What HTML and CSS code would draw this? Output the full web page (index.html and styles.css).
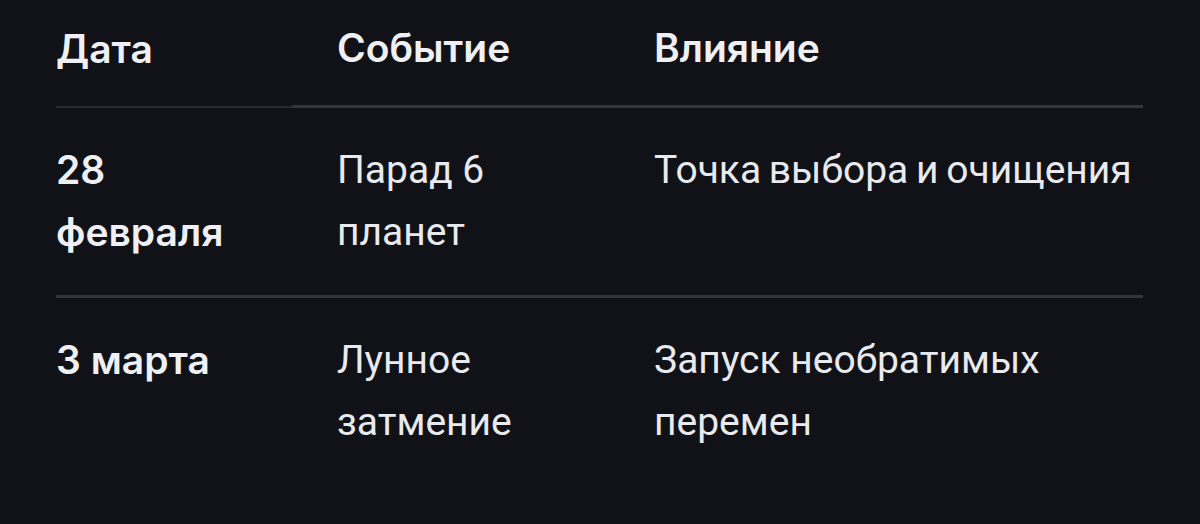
FILE: index.html
```html
<!DOCTYPE html>
<html lang="ru">
<head>
<meta charset="utf-8">
<link rel="stylesheet" href="styles.css">
</head>
<body>
<table class="events">
  <thead>
    <tr>
      <th class="c-date">Дата</th>
      <th class="c-event">Событие</th>
      <th class="c-effect">Влияние</th>
    </tr>
  </thead>
  <tbody>
    <tr>
      <td class="c-date">28<br>февраля</td>
      <td class="c-event">Парад 6<br>планет</td>
      <td class="c-effect wide">Точка выбора и очищения</td>
    </tr>
    <tr>
      <td class="c-date">3 марта</td>
      <td class="c-event">Лунное<br>затмение</td>
      <td class="c-effect">Запуск необратимых<br>перемен</td>
    </tr>
  </tbody>
</table>
</body>
</html>
```

FILE: styles.css
```css
html, body {
  margin: 0;
  padding: 0;
  background: #111217;
  height: 100%;
}

.events {
  margin-left: 56px;
  width: 1087px;
  border-collapse: separate;
  border-spacing: 0;
  table-layout: fixed;
  color: #e9eaee;
  font-family: Roboto, "Noto Sans", sans-serif;
  font-size: 39px;
  line-height: 62px;
}

.events th {
  text-align: left;
  font-family: Inter, "Noto Sans", sans-serif;
  font-weight: 600;
  font-size: 39px;
  color: #eff0f3;
  padding: 17px 0 26px 45px;
  border-bottom: 3px solid #34353a;
}

.events td {
  vertical-align: top;
  font-weight: 400;
  padding: 31px 0 32px 45px;
}

.events td.c-effect {
  white-space: nowrap;
}

.events td.c-effect.wide {
  word-spacing: -2px;
}

.events tbody tr:first-child td {
  border-bottom: 3px solid #34353a;
}

.events th.c-date,
.events td.c-date {
  padding-left: 0;
  border-bottom-width: 2px;
  border-bottom-color: #2a2b30;
}

.events td.c-date {
  font-family: Inter, "Noto Sans", sans-serif;
  font-weight: 600;
  font-size: 39px;
  color: #eff0f3;
}

.events tbody tr:last-child td {
  border-bottom: none;
}

.c-date { width: 236px; }
.c-event { width: 272px; }
.c-effect { width: auto; }
```
